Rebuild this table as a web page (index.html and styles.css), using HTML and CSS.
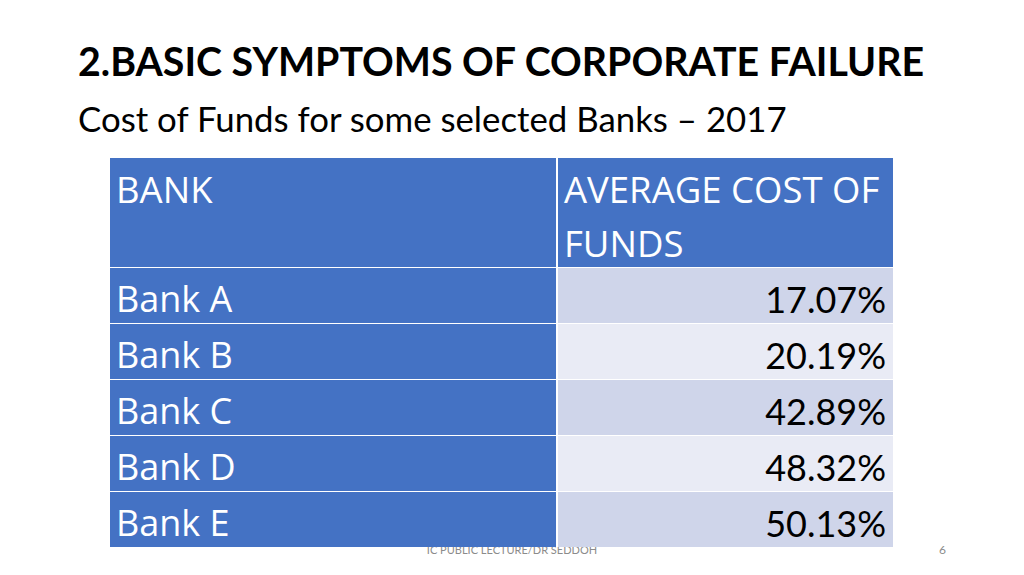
FILE: index.html
```html
<!DOCTYPE html>
<html lang="en">
<head>
<meta charset="utf-8">
<title>Basic Symptoms of Corporate Failure</title>
<link rel="stylesheet" href="styles.css">
</head>
<body>
<div class="slide">
  <h1 class="title">2.BASIC SYMPTOMS OF CORPORATE FAILURE</h1>
  <p class="subtitle">Cost of Funds for some selected Banks – 2017</p>
  <div class="table">
    <div class="cell head">BANK</div>
    <div class="cell head">AVERAGE COST OF FUNDS</div>
    <div class="cell name">Bank A</div>
    <div class="cell value dark">17.07%</div>
    <div class="cell name">Bank B</div>
    <div class="cell value light">20.19%</div>
    <div class="cell name">Bank C</div>
    <div class="cell value dark">42.89%</div>
    <div class="cell name">Bank D</div>
    <div class="cell value light">48.32%</div>
    <div class="cell name">Bank E</div>
    <div class="cell value dark">50.13%</div>
  </div>
  <div class="footer">IC PUBLIC LECTURE/DR SEDDOH</div>
  <div class="page-num">6</div>
</div>
</body>
</html>
```

FILE: styles.css
```css
html, body {
  margin: 0;
  padding: 0;
  background: #ffffff;
}

.slide {
  position: relative;
  width: 1024px;
  height: 575px;
  overflow: hidden;
  background: #ffffff;
  padding: 37px 0 0 78px;
  box-sizing: border-box;
  font-family: Lato, "Liberation Sans", sans-serif;
  color: #000000;
}

.title {
  margin: 0;
  font-family: Lato, sans-serif;
  font-weight: 700;
  font-size: 39.3px;
  line-height: 48px;
  white-space: nowrap;
}

.subtitle {
  margin: 12.5px 0 0 0;
  font-family: Lato, sans-serif;
  font-weight: 400;
  font-size: 34.8px;
  line-height: 42px;
  white-space: nowrap;
}

.table {
  position: relative;
  z-index: 2;
  margin: 18.5px 0 0 32px;
  width: 783px;
  display: grid;
  grid-template-columns: 446px 335px;
  grid-template-rows: 109px repeat(5, 55px);
  column-gap: 2px;
  row-gap: 1px;
  background: #ffffff;
}

.cell {
  box-sizing: border-box;
  padding: 6px 7px 0 6px;
  font-size: 36px;
  line-height: 50px;
  white-space: nowrap;
}

.head {
  background: #4472c4;
  color: #ffffff;
  font-family: "Open Sans", sans-serif;
  font-size: 36.5px;
  line-height: 54px;
  padding-top: 4px;
  white-space: normal;
}

.name {
  background: #4472c4;
  color: #ffffff;
  font-family: "Open Sans", sans-serif;
}

.value {
  text-align: right;
  font-family: Lato, sans-serif;
  color: #000000;
}

.dark {
  background: #cfd5ea;
}

.light {
  background: #e9ebf5;
}

.footer {
  position: absolute;
  left: 0;
  right: 0;
  top: 542px;
  text-align: center;
  font-family: Lato, sans-serif;
  font-size: 11px;
  line-height: 15px;
  color: #8b8b8b;
  z-index: 1;
}

.page-num {
  position: absolute;
  top: 542px;
  right: 78px;
  font-family: Lato, sans-serif;
  font-size: 12px;
  line-height: 15px;
  color: #8b8b8b;
}
```
